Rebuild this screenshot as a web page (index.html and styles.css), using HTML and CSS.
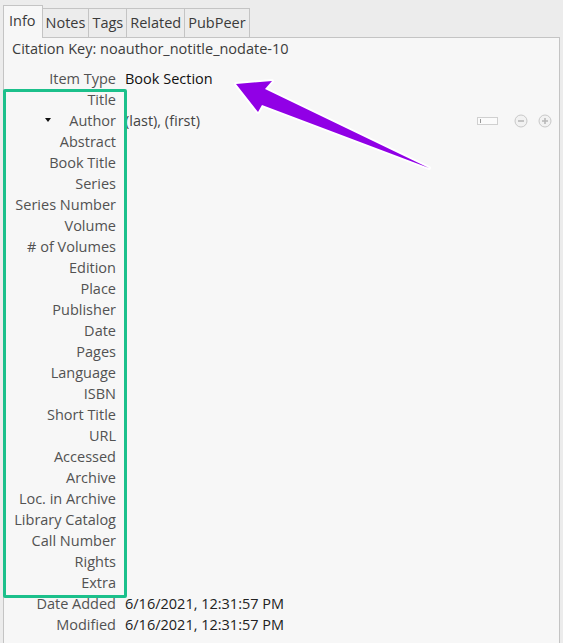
FILE: index.html
```html
<!DOCTYPE html>
<html>
<head>
<meta charset="utf-8">
<link rel="stylesheet" href="styles.css">
</head>
<body>
<div class="tabs">
  <div class="tab active">Info</div>
  <div class="tab">Notes</div>
  <div class="tab">Tags</div>
  <div class="tab">Related</div>
  <div class="tab">PubPeer</div>
</div>
<div class="panel">
  <div class="citekey">Citation Key: noauthor_notitle_nodate-10</div>
  <div class="row type"><span class="label">Item Type</span><span class="value">Book Section</span></div>
  <div class="row"><span class="label">Title</span><span class="value"></span></div>
  <div class="row"><span class="label"><span class="caret"></span>Author</span><span class="value author">(last), (first)
    <span class="controls"><span class="mini-input"></span>
      <svg class="circ" width="14" height="14" viewBox="0 0 14 14"><circle cx="7" cy="7" r="6" fill="#f2f2f2" stroke="#c8c8c8"/><path d="M4 7h6" stroke="#b8b8b8" stroke-width="1.6"/></svg>
      <svg class="circ" width="14" height="14" viewBox="0 0 14 14"><circle cx="7" cy="7" r="6" fill="#f2f2f2" stroke="#c8c8c8"/><path d="M4 7h6M7 4v6" stroke="#b8b8b8" stroke-width="1.6"/></svg>
    </span></span></div>
  <div class="row"><span class="label">Abstract</span></div>
  <div class="row"><span class="label">Book Title</span></div>
  <div class="row"><span class="label">Series</span></div>
  <div class="row"><span class="label">Series Number</span></div>
  <div class="row"><span class="label">Volume</span></div>
  <div class="row"><span class="label"># of Volumes</span></div>
  <div class="row"><span class="label">Edition</span></div>
  <div class="row"><span class="label">Place</span></div>
  <div class="row"><span class="label">Publisher</span></div>
  <div class="row"><span class="label">Date</span></div>
  <div class="row"><span class="label">Pages</span></div>
  <div class="row"><span class="label">Language</span></div>
  <div class="row"><span class="label">ISBN</span></div>
  <div class="row"><span class="label">Short Title</span></div>
  <div class="row"><span class="label">URL</span></div>
  <div class="row"><span class="label">Accessed</span></div>
  <div class="row"><span class="label">Archive</span></div>
  <div class="row"><span class="label">Loc. in Archive</span></div>
  <div class="row"><span class="label">Library Catalog</span></div>
  <div class="row"><span class="label">Call Number</span></div>
  <div class="row"><span class="label">Rights</span></div>
  <div class="row"><span class="label">Extra</span></div>
  <div class="row"><span class="label">Date Added</span><span class="value">6/16/2021, 12:31:57 PM</span></div>
  <div class="row"><span class="label">Modified</span><span class="value">6/16/2021, 12:31:57 PM</span></div>
</div>
<div class="highlight"></div>
<svg class="arrow" width="563" height="643" viewBox="0 0 563 643">
  <polygon points="236,84 272,81 265,89 429,168 262,105 258,112" fill="#9100e6" stroke="#ffffff" stroke-width="4" stroke-linejoin="round" paint-order="stroke"/>
</svg>
</body>
</html>
```
FILE: styles.css
```css
html, body {
  margin: 0;
  padding: 0;
  background: #ececec;
  font-family: "Open Sans", "DejaVu Sans", sans-serif;
  font-size: 14.5px;
  overflow: hidden;
  height: 643px;
}
.tabs {
  display: flex;
  align-items: flex-end;
  height: 37px;
  padding-left: 3px;
}
.tab {
  height: 29px;
  line-height: 28px;
  padding: 0 3px;
  border: 1px solid #c4c4c4;
  border-left: none;
  border-bottom: none;
  background: #ececec;
  color: #3a3a3a;
  box-sizing: border-box;
}
.tab.active {
  height: 33px;
  line-height: 30px;
  padding: 0 6px 0 5px;
  border-left: 1px solid #c4c4c4;
  background: #f7f7f7;
  margin-bottom: -1px;
  position: relative;
}
.panel {
  margin: 0 3px 0 3px;
  border: 1px solid #c4c4c4;
  border-bottom: none;
  background: #f7f7f7;
  height: 620px;
  box-sizing: border-box;
  color: #505050;
}
.citekey {
  height: 21px;
  line-height: 21px;
  padding-left: 8px;
  color: #3c3c3c;
  margin-bottom: 9px;
}
.row {
  display: grid;
  grid-template-columns: 112px 1fr;
  column-gap: 9px;
  height: 21px;
  line-height: 22px;
}
.label {
  text-align: right;
  color: #525252;
  white-space: nowrap;
}
.value {
  color: #222;
  white-space: nowrap;
}
.type .value {
  color: #111;
}
.author {
  display: flex;
  align-items: center;
  color: #444;
}
.caret {
  display: inline-block;
  width: 0;
  height: 0;
  border-left: 3.5px solid transparent;
  border-right: 3.5px solid transparent;
  border-top: 4px solid #111;
  vertical-align: middle;
  margin-right: 18px;
  position: relative;
  top: -2px;
}
.controls {
  margin-left: auto;
  margin-right: 7px;
  display: flex;
  align-items: center;
  gap: 10px;
}
.mini-input {
  width: 19px;
  height: 6px;
  border: 1px solid #d0d0d0;
  background: #fbfbfb;
  margin-right: 6px;
  position: relative;
}
.mini-input::before {
  content: "";
  position: absolute;
  left: 2px;
  top: 1px;
  width: 1px;
  height: 4px;
  background: #999;
}
.circ {
  display: block;
}
.highlight {
  position: absolute;
  left: 3px;
  top: 89px;
  width: 124px;
  height: 509px;
  border: 3px solid #1cc08b;
  border-radius: 2px;
  box-sizing: border-box;
}
.arrow {
  position: absolute;
  left: 0;
  top: 0;
  pointer-events: none;
}
```
